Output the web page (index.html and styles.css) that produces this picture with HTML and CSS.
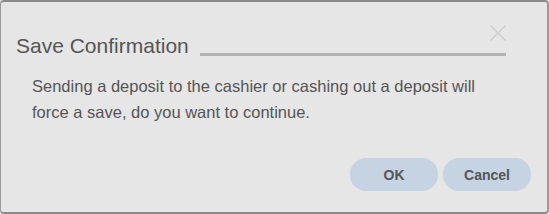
FILE: index.html
```html
<!DOCTYPE html>
<html>
<head>
<meta charset="utf-8">
<link rel="stylesheet" href="styles.css">
</head>
<body>
<div class="dialog">
  <div class="close">
    <svg width="18" height="18" viewBox="0 0 18 18"><path d="M1.5 1.5 L16.5 16.5 M16.5 1.5 L1.5 16.5" stroke="#cdcdcd" stroke-width="1.5" fill="none"/></svg>
  </div>
  <div class="header">
    <span class="title">Save Confirmation</span>
    <span class="rule"></span>
  </div>
  <p class="message">Sending a deposit to the cashier or cashing out a deposit will force a save, do you want to continue.</p>
  <div class="actions">
    <button class="btn">OK</button>
    <button class="btn">Cancel</button>
  </div>
</div>
</body>
</html>
```
FILE: styles.css
```css
html, body {
  margin: 0;
  padding: 0;
  background: #e6e6e6;
}
.dialog {
  position: relative;
  box-sizing: border-box;
  width: 549px;
  height: 214px;
  background: #e6e6e6;
  border: 1px solid #9a9a9a;
  border-top: 2px solid #8a8a8a;
  border-bottom: 2px solid #8a8a8a;
  border-right: 2px solid #9a9a9a;
  border-radius: 4px;
  font-family: "Liberation Sans", Arial, sans-serif;
  color: #555;
  padding: 0 15px 0 15px;
}
.close {
  position: absolute;
  top: 22px;
  right: 40px;
  width: 18px;
  height: 18px;
}
.close svg { display: block; }
.header {
  display: flex;
  align-items: flex-end;
  padding-top: 32px;
  height: 23px;
}
.title {
  font-size: 21px;
  line-height: 23px;
  color: #555;
  white-space: nowrap;
}
.rule {
  flex: 1;
  height: 3px;
  background: #b3b3b3;
  margin-left: 11px;
  margin-right: 26px;
  margin-bottom: 1px;
}
.message {
  margin: 16px 0 0 16px;
  width: 470px;
  font-size: 16.5px;
  line-height: 26px;
  color: #555;
}
.actions {
  display: flex;
  justify-content: flex-end;
  gap: 5px;
  margin-top: 33px;
  margin-right: 1px;
}
.btn {
  width: 88px;
  height: 33px;
  border: none;
  border-radius: 16px;
  background: #c5d3e2;
  color: #555;
  font-family: "Liberation Sans", Arial, sans-serif;
  font-weight: bold;
  font-size: 14px;
  padding: 0;
}
```
